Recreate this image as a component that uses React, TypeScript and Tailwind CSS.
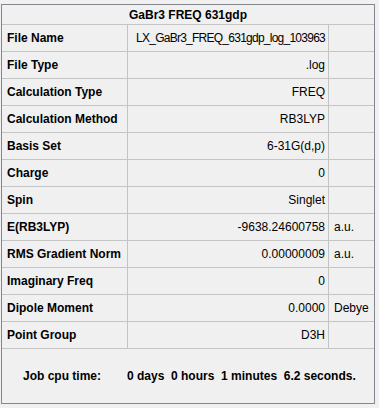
type Row = { label: string; value: string; unit?: string; tight?: boolean };

const rows: Row[] = [
  { label: "File Name", value: "LX_GaBr3_FREQ_631gdp_log_103963", tight: true },
  { label: "File Type", value: ".log" },
  { label: "Calculation Type", value: "FREQ" },
  { label: "Calculation Method", value: "RB3LYP" },
  { label: "Basis Set", value: "6-31G(d,p)" },
  { label: "Charge", value: "0" },
  { label: "Spin", value: "Singlet" },
  { label: "E(RB3LYP)", value: "-9638.24600758", unit: "a.u." },
  { label: "RMS Gradient Norm", value: "0.00000009", unit: "a.u." },
  { label: "Imaginary Freq", value: "0" },
  { label: "Dipole Moment", value: "0.0000", unit: "Debye" },
  { label: "Point Group", value: "D3H" },
];

export default function App() {
  return (
    <div
      className="w-[379px] h-[408px] bg-[#f0f0f0] pt-[4px] pl-[1px] text-[12px] text-black"
      style={{ fontFamily: '"Liberation Sans", Arial, sans-serif' }}
    >
      <div className="w-[374px] h-[400px] border border-[#828790] flex flex-col">
        <div className="h-[20px] border-b border-[#c4c4c4] flex items-center justify-center font-bold">
          GaBr3 FREQ 631gdp
        </div>
        {rows.map((r) => (
          <div
            key={r.label}
            className="grid grid-cols-[126px_201px_1fr] h-[27px] border-b border-[#c4c4c4]"
          >
            <div className="border-r border-[#c4c4c4] flex items-center pl-[5px] font-bold">
              {r.label}
            </div>
            <div
              className={
                r.tight
                  ? "border-r border-[#c4c4c4] flex items-center justify-end pr-[3px] tracking-[-0.75px]"
                  : "border-r border-[#c4c4c4] flex items-center justify-end pr-[3px]"
              }
            >
              {r.value}
            </div>
            <div className="flex items-center pl-[5px]">{r.unit}</div>
          </div>
        ))}
        <div className="flex-1 flex items-center font-bold whitespace-pre">
          <span className="ml-[21px] w-[104px]">Job cpu time:</span>
          <span>0 days  0 hours  1 minutes  6.2 seconds.</span>
        </div>
      </div>
    </div>
  );
}
